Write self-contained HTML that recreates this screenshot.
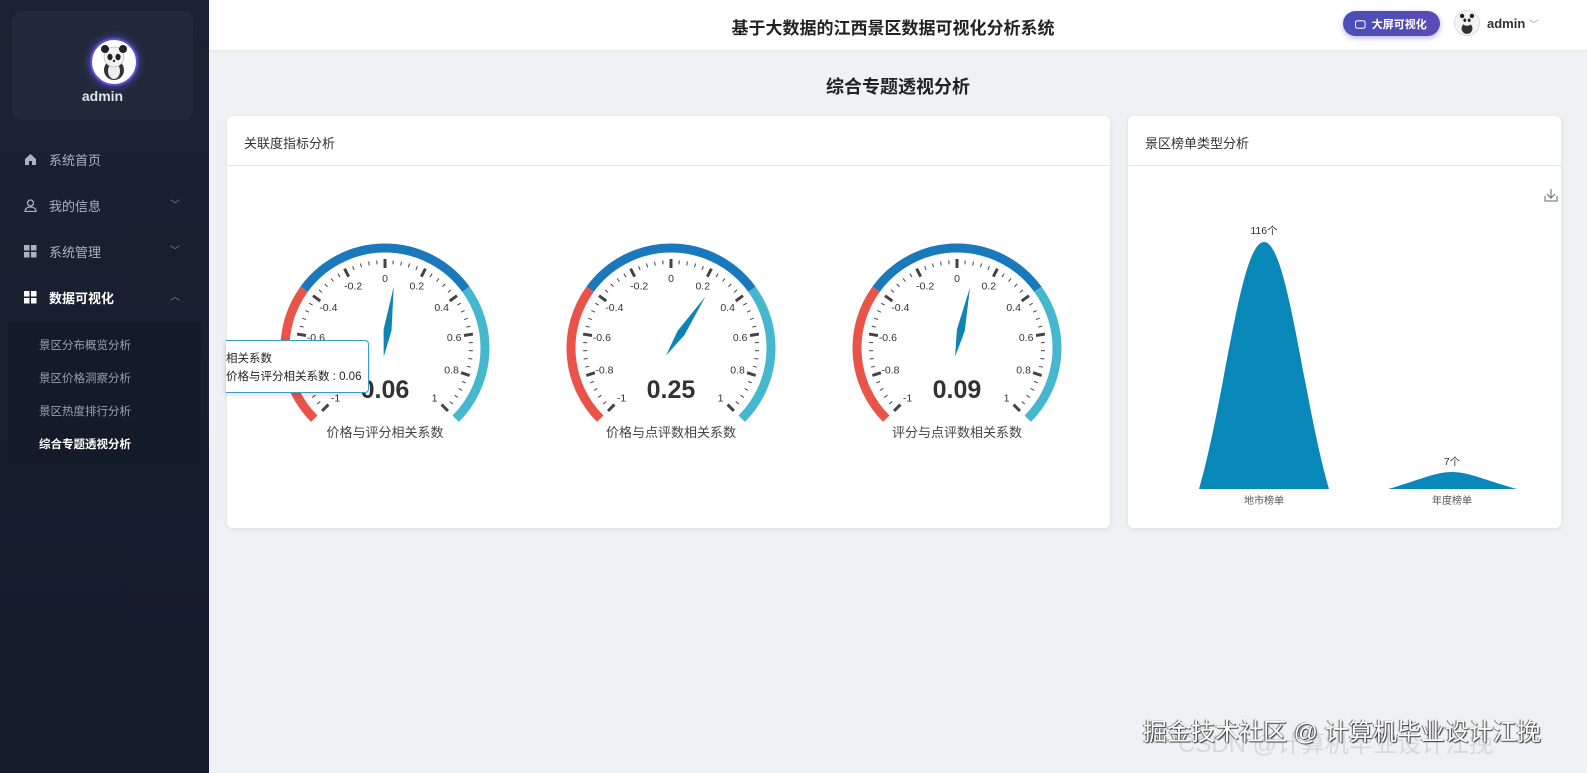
<!DOCTYPE html>
<html><head><meta charset="utf-8"><style>
*{margin:0;padding:0;box-sizing:border-box}
body{width:1587px;height:773px;overflow:hidden;font-family:"Liberation Sans","Noto Sans CJK SC",sans-serif;background:#eff1f4;position:relative}
.side{position:absolute;left:0;top:0;width:209px;height:773px;background:linear-gradient(180deg,#1a2233,#141b2b)}
.prof{position:absolute;left:12px;top:11px;width:181px;height:109px;border-radius:10px;background:#212a3b}
.av{position:absolute;left:78px;top:27px;width:48px;height:48px;border-radius:50%;background:#fff;border:2px solid #5b4fd0;box-shadow:0 0 8px #5b4fd0}
.prof .nm{position:absolute;top:77px;width:100%;text-align:center;color:#dfe3ea;font-weight:bold;font-size:14px}
.mi{position:absolute;left:24px;color:#aab1bf;font-size:13px;display:flex;align-items:center}
.mi i{width:13px;height:13px;margin-right:12px;display:inline-block}
.chev{position:absolute;left:170px;color:#7b8394;font-size:10px}
.sub{position:absolute;left:8px;top:322px;width:193px;height:143px;background:#131a28}
.sub div{position:absolute;left:31px;font-size:11.5px;color:#98a0ae}
.hdr{position:absolute;left:209px;top:0;width:1378px;height:50px;background:#fff;box-shadow:0 1px 4px rgba(0,0,0,.06)}
.card{position:absolute;background:#fff;border-radius:6px;box-shadow:0 1px 6px rgba(0,0,0,.08)}
.ch{height:50px;border-bottom:1px solid #e6e8eb;font-size:13px;color:#333;padding:17px 0 0 17px}
</style></head><body>
<div class="side">
 <div class="prof"><div class="av"><svg width="44" height="44" viewBox="0 0 44 44"><ellipse cx="22" cy="30" rx="10" ry="10" fill="#333"/><ellipse cx="22" cy="31" rx="6" ry="8" fill="#eee"/><circle cx="22" cy="17" r="10" fill="#f2f2f2" stroke="#999" stroke-width=".5"/><circle cx="13" cy="9" r="4" fill="#222"/><circle cx="31" cy="9" r="4" fill="#222"/><ellipse cx="18" cy="17" rx="2.6" ry="3.2" fill="#222"/><ellipse cx="26" cy="17" rx="2.6" ry="3.2" fill="#222"/><circle cx="22" cy="21" r="1.2" fill="#222"/></svg></div><div class="nm">admin</div></div>
 <div class="mi" style="top:150px"><i><svg width="13" height="13" viewBox="0 0 13 13"><path d="M6.5 1L1 6v6h4V8h3v4h4V6z" fill="#aab1bf"/></svg></i>系统首页</div>
 <div class="mi" style="top:196px"><i><svg width="13" height="13" viewBox="0 0 13 13"><circle cx="6.5" cy="4" r="3" fill="none" stroke="#aab1bf" stroke-width="1.3"/><path d="M1 12.5c0-3 2.5-4.5 5.5-4.5s5.5 1.5 5.5 4.5z" fill="none" stroke="#aab1bf" stroke-width="1.3"/></svg></i>我的信息</div><div class="chev" style="top:196px">﹀</div>
 <div class="mi" style="top:242px"><i><svg width="13" height="13"><rect x="0" y="0" width="5.5" height="5.5" fill="#aab1bf"/><rect x="7" y="0" width="5.5" height="5.5" fill="#aab1bf"/><rect x="0" y="7" width="5.5" height="5.5" fill="#aab1bf"/><rect x="7" y="7" width="5.5" height="5.5" fill="#aab1bf"/></svg></i>系统管理</div><div class="chev" style="top:242px">﹀</div>
 <div class="mi" style="top:288px;color:#fff;font-weight:bold"><i><svg width="13" height="13"><rect x="0" y="0" width="5.5" height="5.5" fill="#fff"/><rect x="7" y="0" width="5.5" height="5.5" fill="#fff"/><rect x="0" y="7" width="5.5" height="5.5" fill="#fff"/><rect x="7" y="7" width="5.5" height="5.5" fill="#fff"/></svg></i>数据可视化</div><div class="chev" style="top:288px">︿</div>
 <div class="sub"><div style="top:15px">景区分布概览分析</div><div style="top:48px">景区价格洞察分析</div><div style="top:81px">景区热度排行分析</div><div style="top:114px;color:#fff;font-weight:bold">综合专题透视分析</div></div>
</div>
<div class="hdr">
 <div style="position:absolute;left:0;width:1368px;top:14px;text-align:center;font-size:17px;font-weight:bold;color:#222">基于大数据的江西景区数据可视化分析系统</div>
 <div style="position:absolute;left:1134px;top:11px;width:97px;height:25px;border-radius:13px;background:linear-gradient(90deg,#4a4fb8,#5a4bb5);color:#fff;font-size:11px;font-weight:bold;padding:5px 0 0 12px;box-shadow:0 2px 6px rgba(80,70,180,.4)">🖵&nbsp; 大屏可视化</div>
 <div style="position:absolute;left:1245px;top:10px;width:26px;height:26px;border-radius:50%;background:#f3f3f3;border:1px solid #ddd"><svg width="24" height="24" viewBox="0 0 44 44"><ellipse cx="22" cy="32" rx="10" ry="10" fill="#333"/><circle cx="22" cy="17" r="10" fill="#f2f2f2"/><circle cx="13" cy="9" r="4" fill="#222"/><circle cx="31" cy="9" r="4" fill="#222"/><ellipse cx="18" cy="17" rx="2.6" ry="3.2" fill="#222"/><ellipse cx="26" cy="17" rx="2.6" ry="3.2" fill="#222"/></svg></div>
 <div style="position:absolute;left:1278px;top:16px;font-size:13px;font-weight:bold;color:#333">admin <span style="color:#999;font-weight:normal;font-size:10px">﹀</span></div>
</div>
<div style="position:absolute;left:209px;width:1378px;top:73px;text-align:center;font-size:18px;font-weight:bold;color:#222">综合专题透视分析</div>
<div class="card" style="left:227px;top:116px;width:883px;height:412px"><div class="ch">关联度指标分析</div></div>
<div class="card" style="left:1128px;top:116px;width:433px;height:412px"><div class="ch">景区榜单类型分析</div></div>
<svg id="g" style="position:absolute;left:0;top:0" width="1587" height="773"></svg>
<div style="position:absolute;left:226px;top:340px;width:143px;height:53px;background:#fff;border:1px solid #3a9ac0;border-left:none;border-radius:0 4px 4px 0;box-shadow:0 2px 6px rgba(0,0,0,.15);font-size:11.5px;color:#222;padding:9px 0 0 0">相关系数<br><span style="line-height:22px">价格与评分相关系数 : 0.06</span></div>
<div style="position:absolute;left:1178px;top:724px;font-size:24px;color:#d8d8d8;white-space:nowrap">CSDN @计算机毕业设计江挽</div>
<div style="position:absolute;left:1143px;top:712px;font-size:24px;color:#fff;text-shadow:1px 1px 1px #333,-1px 0 1px #555;white-space:nowrap">掘金技术社区 @ 计算机毕业设计江挽</div>
<script>
var s=document.getElementById('g'),NS='http://www.w3.org/2000/svg',h='';
function P(cx,cy,r,a){a=a*Math.PI/180;return[cx+r*Math.cos(a),cy-r*Math.sin(a)]}
function arc(cx,cy,r,a1,a2,c){var p=P(cx,cy,r,a1),q=P(cx,cy,r,a2);return '<path d="M'+p[0]+' '+p[1]+' A'+r+' '+r+' 0 0 1 '+q[0]+' '+q[1]+'" stroke="'+c+'" stroke-width="9" fill="none"/>'}
[[385,0.06,'价格与评分相关系数'],[671,0.25,'价格与点评数相关系数'],[957,0.09,'评分与点评数相关系数']].forEach(function(g){
 var cx=g[0],cy=348;
 h+=arc(cx,cy,100,225,144,'#e8534a')+arc(cx,cy,100,144,36,'#1a78bd')+arc(cx,cy,100,36,-45,'#45b8cf');
 for(var i=0;i<=50;i++){var a=225-i*5.4,big=i%5==0;var p=P(cx,cy,big?89:88,a),q=P(cx,cy,big?80:84,a);
  h+='<line x1="'+p[0]+'" y1="'+p[1]+'" x2="'+q[0]+'" y2="'+q[1]+'" stroke="#444" stroke-width="'+(big?3:1)+'"/>';
  if(big){var v=(-1+i/25);var t=P(cx,cy,70,a);h+='<text x="'+t[0]+'" y="'+(t[1]+4)+'" font-size="10.5" fill="#333" text-anchor="middle">'+(Math.abs(v)<1e-9?'0':(+v.toFixed(1)))+'</text>'}}
 var a=225-(g[1]+1)/2*270,tip=P(cx,cy,62,a),l=P(cx,cy,14,a+90),r=P(cx,cy,14,a-90),tl=P(cx,cy,9,a+180),ar=a*Math.PI/180;
 var b1=[cx+4*Math.cos(ar+Math.PI/2),cy-4*Math.sin(ar+Math.PI/2)],b2=[cx+4*Math.cos(ar-Math.PI/2),cy-4*Math.sin(ar-Math.PI/2)];
 var m1=P(cx,cy,18,a);var w1=[m1[0]+4*Math.cos(ar+Math.PI/2),m1[1]-4*Math.sin(ar+Math.PI/2)],w2=[m1[0]+4*Math.cos(ar-Math.PI/2),m1[1]-4*Math.sin(ar-Math.PI/2)];
 h+='<path d="M'+tip+' L'+w1+' L'+tl+' L'+w2+'Z" fill="#0e84b2"/>';
 h+='<text x="'+cx+'" y="'+398+'" font-size="25" font-weight="bold" fill="#333" text-anchor="middle">'+g[1].toFixed(2)+'</text>';
 h+='<text x="'+cx+'" y="'+437+'" font-size="13" fill="#444" text-anchor="middle" font-family="Liberation Sans,Noto Sans CJK SC,sans-serif">'+g[2]+'</text>';
});
h+='<path d="M1199 489 C1225 400 1240 242 1264 242 C1288 242 1303 400 1329 489Z" fill="#0888b8"/>';
h+='<path d="M1388 489 C1420 480 1435 472 1452 472 C1469 472 1484 480 1517 489Z" fill="#0888b8"/>';
h+='<text x="1264" y="234" font-size="10.5" fill="#333" text-anchor="middle">116个</text><text x="1452" y="465" font-size="10.5" fill="#333" text-anchor="middle">7个</text>';
h+='<text x="1264" y="504" font-size="10" fill="#555" text-anchor="middle">地市榜单</text><text x="1452" y="504" font-size="10" fill="#555" text-anchor="middle">年度榜单</text>';
h+='<path d="M1551 189v9M1547 194l4 4 4-4M1545 196v5h12v-5" stroke="#666" fill="none" stroke-width="1"/>';
s.innerHTML=h;
</script>
</body></html>
